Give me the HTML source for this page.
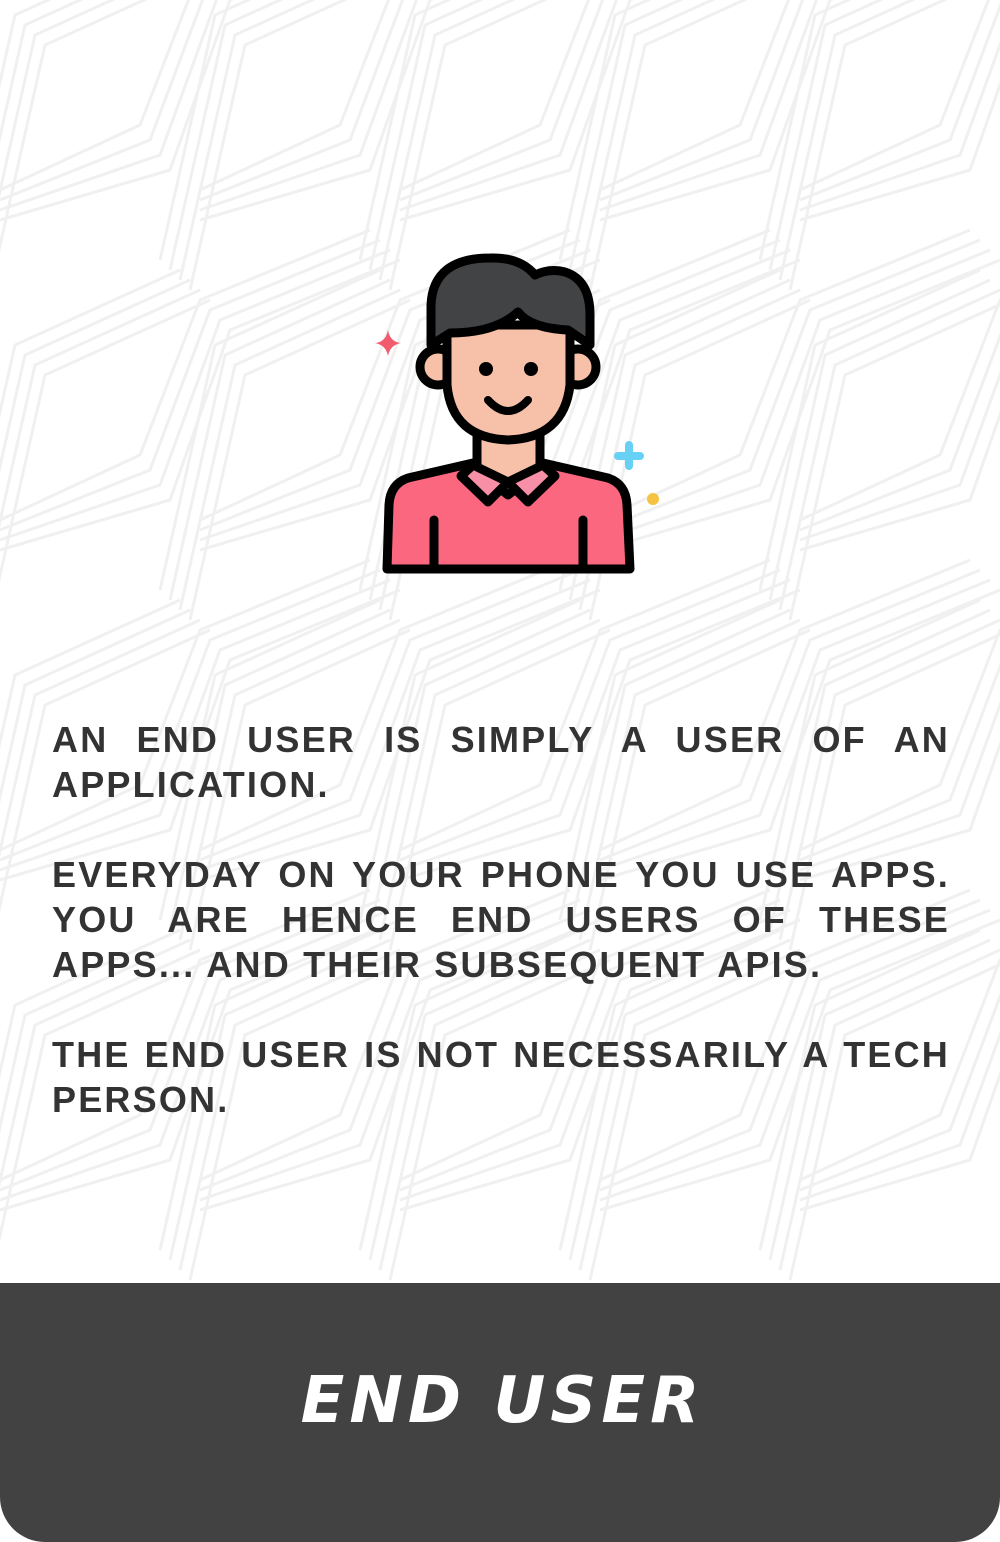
<!DOCTYPE html>
<html><head><meta charset="utf-8"><style>
html,body{margin:0;padding:0;}
body{width:1000px;height:1542px;position:relative;overflow:hidden;background:#fff;font-family:"Liberation Sans",Arial,sans-serif;}
.bg{position:absolute;left:0;top:0;}
.txt{position:absolute;left:52px;top:717px;width:898px;color:#333;font-size:36px;font-weight:bold;line-height:45px;letter-spacing:2.2px;text-align:justify;}
.txt p{margin:0 0 45px 0;}
.footer{position:absolute;left:0;top:1283px;width:1000px;height:259px;background:#424242;border-radius:0 0 45px 45px;}
.footer h1{margin:0;position:absolute;left:0;width:1000px;top:82px;text-align:center;color:#fff;font-family:"DejaVu Sans",sans-serif;font-style:oblique;font-weight:bold;font-size:64px;line-height:72px;letter-spacing:5px;padding-left:5px;box-sizing:border-box;}
</style></head><body>
<svg class="bg" width="1000" height="1283" viewBox="0 0 1000 1283">
<g fill="none" stroke="#f0f0f0" stroke-width="3">
<g id="z">
<polyline points="-40,260 15,15 180,-60"/>
<polyline points="-30,270 25,25 190,-50"/>
<polyline points="-20,280 35,35 200,-40"/>
<polyline points="-10,290 45,45 210,-30"/>
<polyline points="0,190 140,125 200,-30 370,-100"/>
<polyline points="0,200 150,140 210,-20 380,-90"/>
<polyline points="0,210 160,155 220,-10 390,-80"/>
<polyline points="0,220 170,170 230,0 400,-70"/>
</g>
<use href="#z" x="0" y="330"/>
<use href="#z" x="0" y="660"/>
<use href="#z" x="0" y="990"/>
<use href="#z" x="200" y="0"/>
<use href="#z" x="200" y="330"/>
<use href="#z" x="200" y="660"/>
<use href="#z" x="200" y="990"/>
<use href="#z" x="400" y="0"/>
<use href="#z" x="400" y="330"/>
<use href="#z" x="400" y="660"/>
<use href="#z" x="400" y="990"/>
<use href="#z" x="600" y="0"/>
<use href="#z" x="600" y="330"/>
<use href="#z" x="600" y="660"/>
<use href="#z" x="600" y="990"/>
<use href="#z" x="800" y="0"/>
<use href="#z" x="800" y="330"/>
<use href="#z" x="800" y="660"/>
<use href="#z" x="800" y="990"/>
</g>
<g stroke="#000" stroke-width="9" stroke-linejoin="round" stroke-linecap="round">
<path d="M473 463 L408 478 Q390 484 389 505 L387 569 L630 569 L627 505 Q626 484 608 478 L543 463 Z" fill="#fc6780"/>
<path d="M477 432 L477 470 L508 495 L540 470 L540 432 Z" fill="#f7c0a8"/>
<path d="M473 465 L461 476 L488 502 L508 482 Z" fill="#f78fa6"/>
<path d="M543 465 L555 476 L528 502 L508 482 Z" fill="#f78fa6"/>
<circle cx="438" cy="367" r="18" fill="#f7c0a8"/>
<circle cx="578" cy="367" r="18" fill="#f7c0a8"/>
<path d="M447 325 L447 385 Q452 438 508 440 Q564 438 570 385 L570 325 Z" fill="#f7c0a8"/>
<path d="M431 345 L431 305 Q433 258 490 258 Q520 257 535 275 Q550 268 565 272 Q590 280 590 315 L590 345 L568 330 Q530 328 518 312 Q495 333 450 333 Z" fill="#424345"/>
<line x1="434" y1="520" x2="434" y2="565"/>
<line x1="583" y1="520" x2="583" y2="565"/>
</g>
<circle cx="486" cy="369" r="7" fill="#000"/>
<circle cx="531" cy="369" r="7" fill="#000"/>
<path d="M488 400 Q508 422 528 400" fill="none" stroke="#000" stroke-width="8" stroke-linecap="round"/>
<path d="M388 330 Q390 342 401 343 Q390 345 388 356 Q386 345 375 343 Q386 342 388 330Z" fill="#f25a6e"/>
<path d="M629 445 L629 466 M618 456 L640 456" stroke="#66d0f5" stroke-width="8" stroke-linecap="round"/>
<circle cx="653" cy="499" r="6" fill="#f5c242"/>
</svg>
<div class="txt">
<p>AN END USER IS SIMPLY A USER OF AN APPLICATION.</p>
<p>EVERYDAY ON YOUR PHONE YOU USE APPS. YOU ARE HENCE END USERS OF THESE APPS... AND THEIR SUBSEQUENT APIS.</p>
<p>THE END USER IS NOT NECESSARILY A TECH PERSON.</p>
</div>
<div class="footer"><h1>END USER</h1></div>
</body></html>
